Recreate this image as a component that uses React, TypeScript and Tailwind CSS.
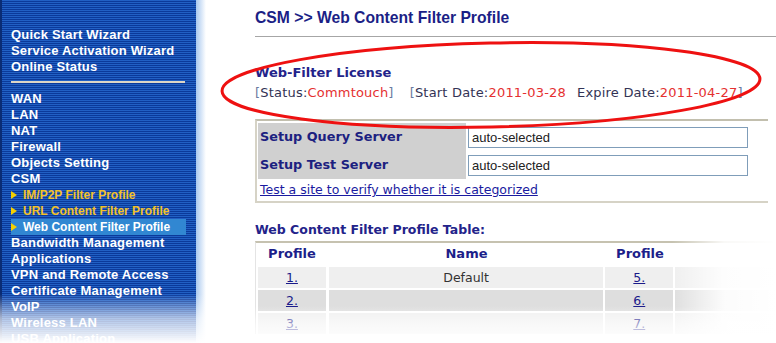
import React from "react";

const sideFont = { fontFamily: '"Liberation Sans", Arial, sans-serif' };
const verd = { fontFamily: '"DejaVu Sans", Verdana, sans-serif' };

function MainItem({ children }: { children: React.ReactNode }) {
  return (
    <div className="h-[16px] leading-[16px] text-[13px] font-bold text-white whitespace-nowrap tracking-[0.2px]">
      {children}
    </div>
  );
}

function SubItem({ children, active }: { children: React.ReactNode; active?: boolean }) {
  return (
    <div
      className={
        "h-[16px] leading-[16px] text-[12px] font-bold whitespace-nowrap flex items-center w-[175px] " +
        (active ? "bg-[#3187d2] text-white" : "text-[#f3c22a]")
      }
    >
      <span className="w-0 h-0 border-y-[4px] border-y-transparent border-l-[6px] border-l-[#f5d000] mr-[6px]" />
      {children}
    </div>
  );
}

export default function App() {
  return (
    <div className="relative w-[776px] h-[343px] overflow-hidden bg-white flex">
      {/* Sidebar */}
      <div className="relative flex shrink-0">
        <div
          className="w-[196px] h-[343px] border-l-2 border-[#0a2c74] pl-[9px] pt-[27px] bg-[repeating-linear-gradient(to_bottom,#2160c4_0px,#2160c4_1px,#0b3a9a_1px,#0b3a9a_2px)]"
          style={sideFont}
        >
          <MainItem>Quick Start Wizard</MainItem>
          <MainItem>Service Activation Wizard</MainItem>
          <MainItem>Online Status</MainItem>
          <div className="mt-[6px] mb-[8px] h-[2px] w-[174px] bg-[#ddd6c6]" />
          <MainItem>WAN</MainItem>
          <MainItem>LAN</MainItem>
          <MainItem>NAT</MainItem>
          <MainItem>Firewall</MainItem>
          <MainItem>Objects Setting</MainItem>
          <MainItem>CSM</MainItem>
          <SubItem>IM/P2P Filter Profile</SubItem>
          <SubItem>URL Content Filter Profile</SubItem>
          <SubItem active>Web Content Filter Profile</SubItem>
          <MainItem>Bandwidth Management</MainItem>
          <MainItem>Applications</MainItem>
          <MainItem>VPN and Remote Access</MainItem>
          <MainItem>Certificate Management</MainItem>
          <MainItem>VoIP</MainItem>
          <MainItem>Wireless LAN</MainItem>
          <MainItem>USB Application</MainItem>
        </div>
        <div className="w-[10px] h-[343px] bg-gradient-to-r from-[#a9c8ee] to-white" />
        <div className="absolute left-0 right-0 top-[294px] h-[49px] bg-gradient-to-b from-white/0 via-white/65 to-white" />
      </div>

      {/* Main */}
      <div className="flex-1 pl-[49px] flex flex-col">
        <div
          className="pt-[9px] h-[27px] text-[15.7px] leading-[18px] font-bold text-[#1b1f86]"
          style={sideFont}
        >
          CSM &gt;&gt; Web Content Filter Profile
        </div>
        <div className="mt-[9px] h-px bg-[#a6a6a6]" />

        <div className="mt-[28px] h-[16px] leading-[16px] text-[13px] font-bold text-[#23238a] whitespace-nowrap" style={verd}>
          Web-Filter License
        </div>
        <div className="mt-[4px] h-[16px] leading-[16px] text-[13px] text-[#333355] whitespace-nowrap tracking-[0.2px]" style={verd}>
          <span className="text-[#6a7aa0]">[</span>Status:<span className="text-[#e53030]">Commtouch</span>
          <span className="text-[#6a7aa0]">]</span>
          <span className="ml-[16px] text-[#6a7aa0]">[</span>Start Date:<span className="text-[#e53030]">2011-03-28</span>
          <span className="ml-[11px]">Expire Date:</span>
          <span className="text-[#e53030]">2011-04-27</span>
          <span className="text-[#6a7aa0]">]</span>
        </div>

        {/* Setup box */}
        <div className="mt-[18px] w-[513px] border-t-2 border-l-2 border-b-2 border-t-[#c2bfae] border-l-[#d6d3c6] border-b-[#d6d3c6] pl-[1px] pt-[2px]">
          <div className="flex">
            <div className="w-[208px] h-[28px] bg-[#d0d0d0] flex items-center pl-[2px] text-[12.8px] font-bold text-[#1c2180] whitespace-nowrap" style={verd}>
              Setup Query Server
            </div>
            <div className="ml-[2px] h-[28px] flex items-start pt-[4px]">
              <div className="w-[280px] h-[21px] border border-[#7f9db9] bg-white pl-[3px] text-[13px] leading-[19px] text-[#222]" style={sideFont}>
                auto-selected
              </div>
            </div>
          </div>
          <div className="flex">
            <div className="w-[208px] h-[28px] bg-[#d0d0d0] flex items-center pl-[2px] text-[12.8px] font-bold text-[#1c2180] whitespace-nowrap" style={verd}>
              Setup Test Server
            </div>
            <div className="ml-[2px] h-[28px] flex items-start pt-[4px]">
              <div className="w-[280px] h-[21px] border border-[#7f9db9] bg-white pl-[3px] text-[13px] leading-[19px] text-[#222]" style={sideFont}>
                auto-selected
              </div>
            </div>
          </div>
          <div className="h-[22px] leading-[22px] pl-[2px] text-[12.5px] text-[#1a1aa0] underline whitespace-nowrap" style={verd}>
            Test a site to verify whether it is categorized
          </div>
        </div>

        <div className="mt-[19px] h-[16px] leading-[16px] text-[12.5px] font-bold text-[#23238a] whitespace-nowrap" style={verd}>
          Web Content Filter Profile Table:
        </div>

        {/* Profile table */}
        <div className="mt-[3px] w-[530px] border-t-2 border-l border-t-[#c6c2b0] border-l-[#e4e4e4] pl-[2px]" style={verd}>
          <div className="flex h-[22px] items-center text-[13px] font-bold text-[#1c1f8a]">
            <div className="w-[68px] text-center">Profile</div>
            <div className="ml-[3px] w-[275px] text-center">Name</div>
            <div className="ml-[2px] w-[68px] text-center">Profile</div>
          </div>
          {[
            { a: "1.", n: "Default", b: "5.", bg: "bg-[#efefef]" },
            { a: "2.", n: "", b: "6.", bg: "bg-[#dedede]" },
            { a: "3.", n: "", b: "7.", bg: "bg-[#efefef]" },
          ].map((r) => (
            <div key={r.a} className="flex h-[21px] mt-[2px] text-[12.5px] leading-[21px]">
              <div className={"w-[68px] text-center " + r.bg}>
                <span className="underline text-[#1a1a8a]">{r.a}</span>
              </div>
              <div className={"ml-[3px] w-[275px] text-center text-[#333] " + r.bg}>{r.n}</div>
              <div className={"ml-[2px] w-[68px] text-center " + r.bg}>
                <span className="underline text-[#1a1a8a]">{r.b}</span>
              </div>
              <div className={"ml-[2px] w-[110px] " + r.bg} />
            </div>
          ))}
        </div>
      </div>

      {/* fades over table */}
      <div className="absolute left-[672px] top-[225px] w-[104px] h-[118px] bg-gradient-to-r from-white/0 via-white/90 to-white" />
      <div className="absolute left-[206px] top-[306px] w-[570px] h-[37px] bg-gradient-to-b from-white/0 via-white/60 to-white" />

      {/* red ellipse annotation */}
      <svg className="absolute left-0 top-0 pointer-events-none" width="776" height="343">
        <ellipse
          cx="491"
          cy="85"
          rx="269"
          ry="42"
          fill="none"
          stroke="#ee1111"
          strokeWidth="3"
          transform="rotate(-1.3 491 85)"
        />
      </svg>
    </div>
  );
}
